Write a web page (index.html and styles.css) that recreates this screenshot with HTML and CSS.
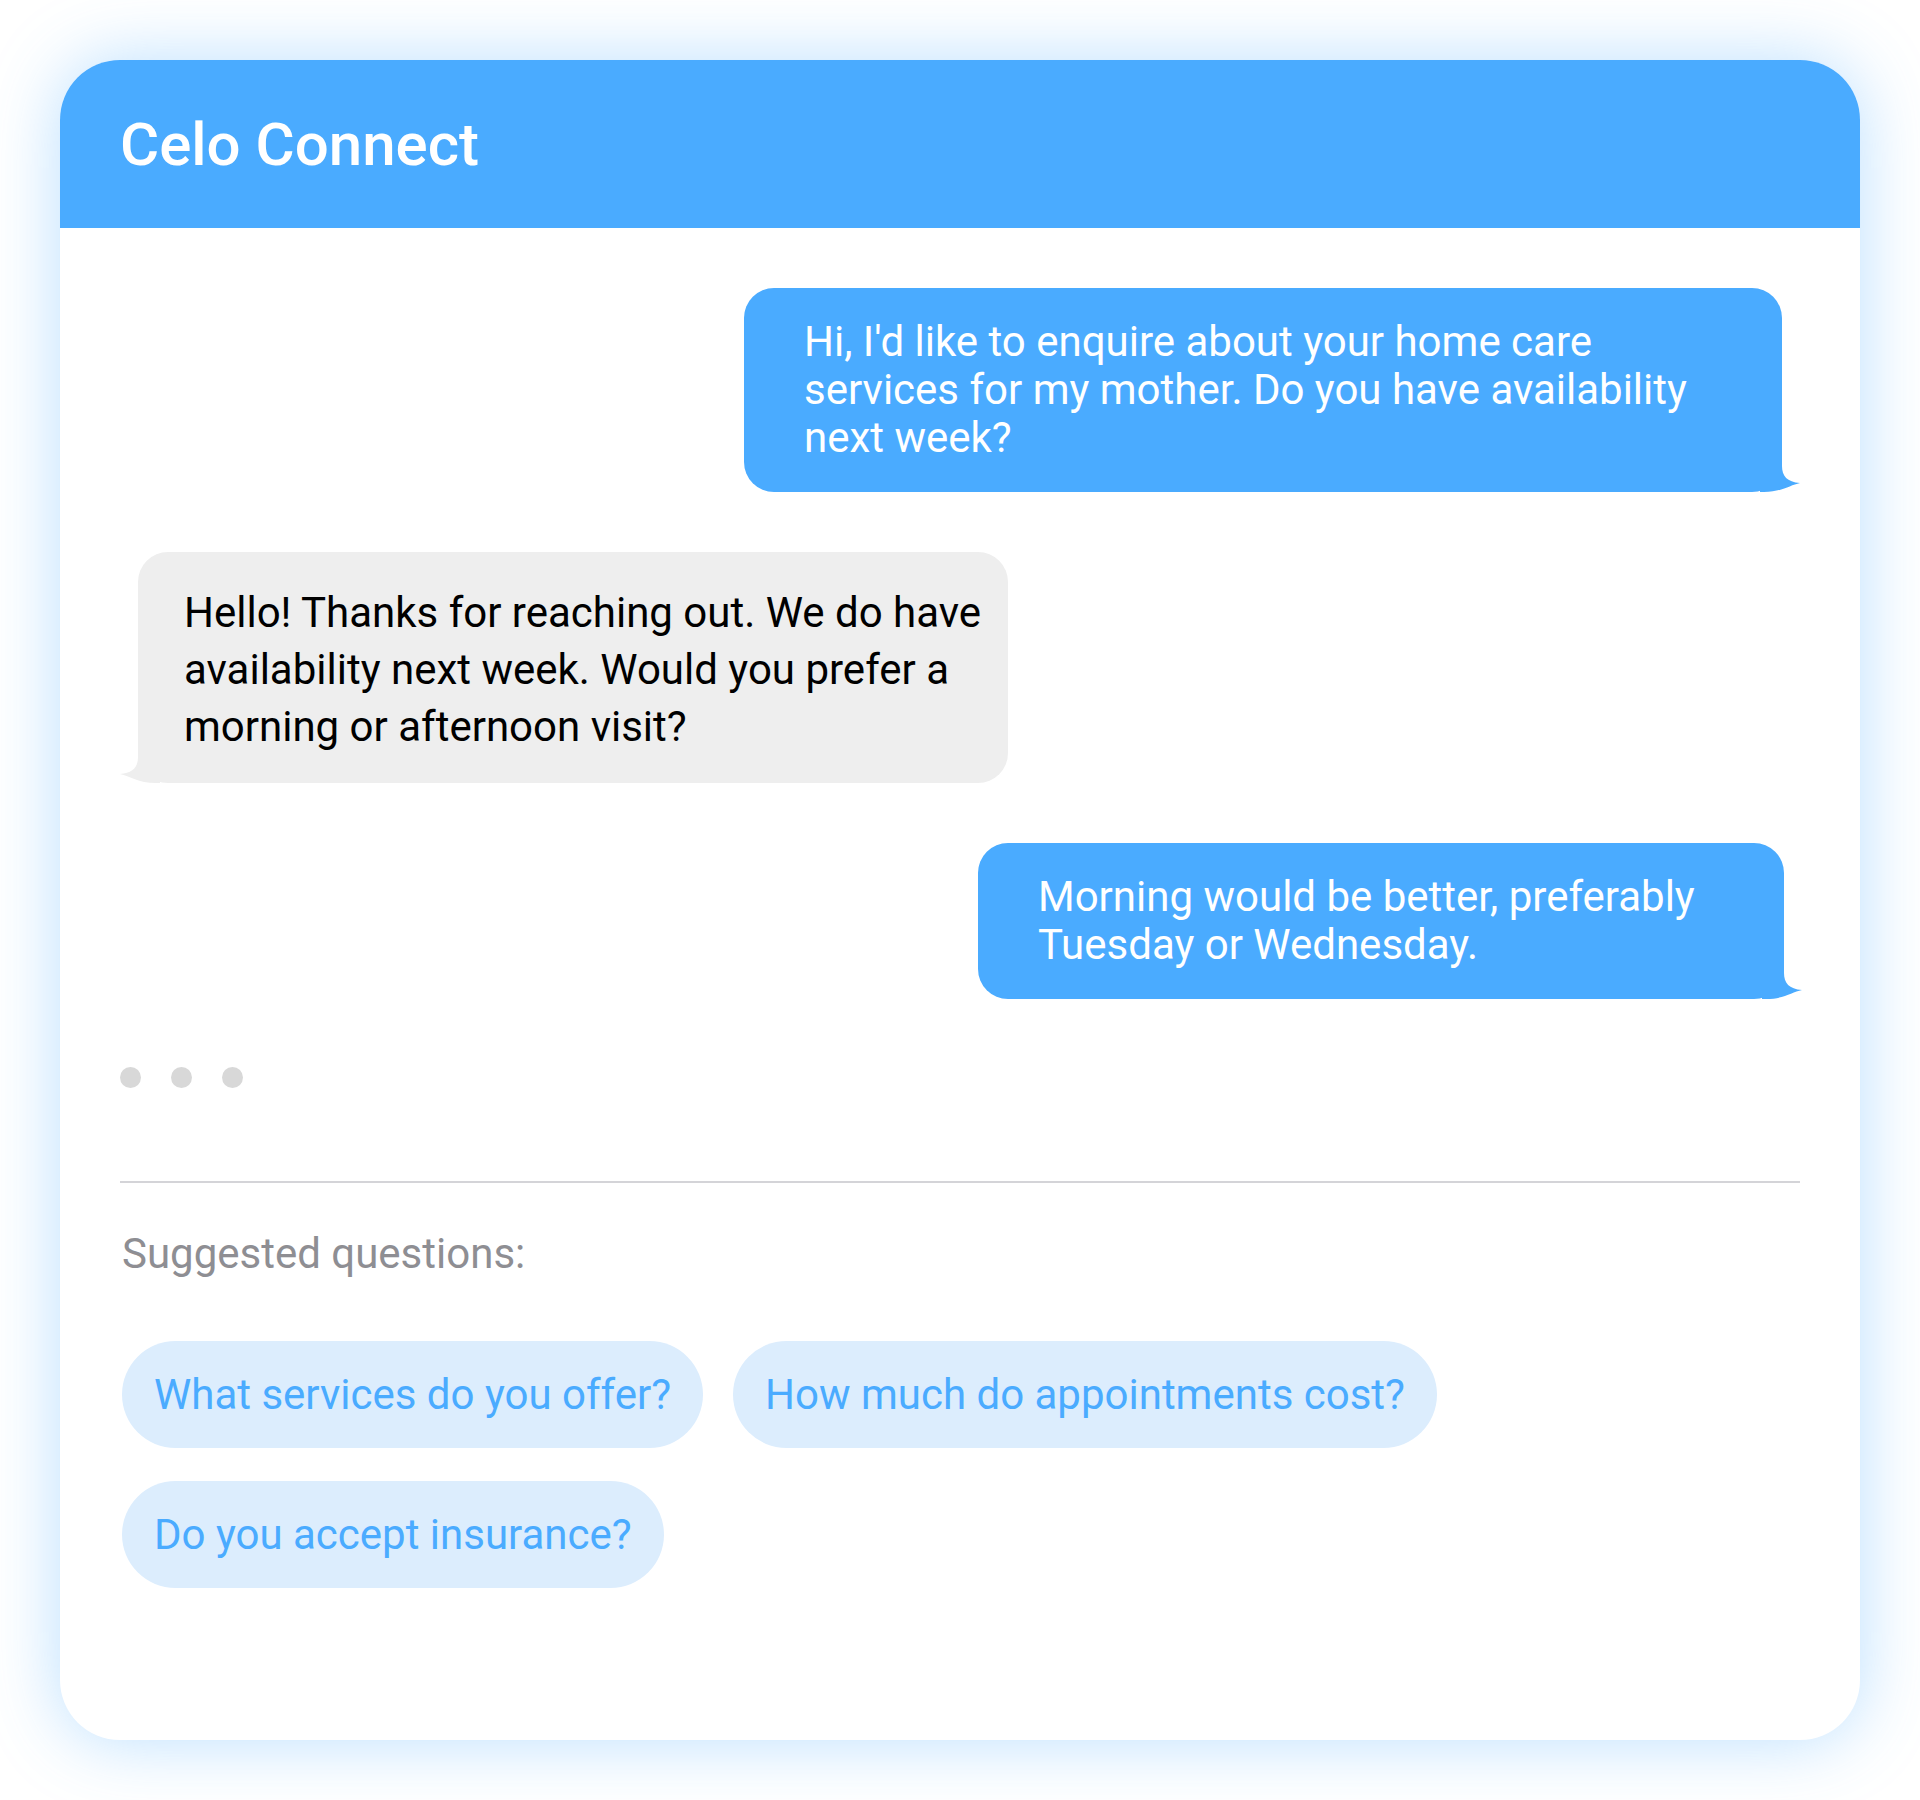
FILE: index.html
```html
<!DOCTYPE html>
<html lang="en">
<head>
    <meta charset="UTF-8">
    <meta name="viewport" content="width=device-width, initial-scale=1.0">
    <title>Celo Connect</title>
    <link rel="stylesheet" href="styles.css">
</head>
<body>

<div class="chat-card">
    <div class="chat-header">
        <h1>Celo Connect</h1>
    </div>

    <div class="chat-body">
        <div class="messages">
            <div class="msg msg-user msg-long">
                <p>Hi, I'd like to enquire about your home care<br>services for my mother. Do you have availability<br>next week?</p>
                <svg class="tail" viewBox="0 0 40 32" width="40" height="32"><path d="M0 0 H22 V6 C22 16 27 22 40 23 C30 25 22 32 4 32 H0 Z"/></svg>
            </div>

            <div class="msg msg-bot">
                <p>Hello! Thanks for reaching out. We do have<br>availability next week. Would you prefer a<br>morning or afternoon visit?</p>
                <svg class="tail" viewBox="0 0 40 32" width="40" height="32"><path d="M0 0 H22 V6 C22 16 27 22 40 23 C30 25 22 32 4 32 H0 Z"/></svg>
            </div>

            <div class="msg msg-user msg-short">
                <p>Morning would be better, preferably<br>Tuesday or Wednesday.</p>
                <svg class="tail" viewBox="0 0 40 32" width="40" height="32"><path d="M0 0 H22 V6 C22 16 27 22 40 23 C30 25 22 32 4 32 H0 Z"/></svg>
            </div>

            <div class="typing">
                <span></span>
                <span></span>
                <span></span>
            </div>
        </div>

        <hr class="divider">

        <div class="suggestions">
            <p class="suggestions-label">Suggested questions:</p>
            <div class="chips">
                <button class="chip">What services do you offer?</button>
                <button class="chip">How much do appointments cost?</button>
                <button class="chip">Do you accept insurance?</button>
            </div>
        </div>
    </div>
</div>

</body>
</html>
```

FILE: styles.css
```css
/* Global Styles */
body {
    font-family: 'Roboto', 'Liberation Sans', sans-serif;
    margin: 0;
    padding: 60px;
    background: #fff;
}

.chat-card {
    width: 1800px;
    background: #fff;
    border-radius: 60px;
    overflow: hidden;
    box-shadow: 0 0 70px rgba(74, 171, 255, 0.38);
}

/* Header */
.chat-header {
    height: 168px;
    background: #4aabff;
    padding: 0 60px;
    display: flex;
    align-items: center;
}

.chat-header h1 {
    margin: 0;
    color: #fff;
    font-size: 60px;
    font-weight: 500;
}

/* Messages */
.chat-body {
    padding: 60px 60px 152px;
}

.messages {
    display: flex;
    flex-direction: column;
    gap: 60px;
}

.msg {
    position: relative;
    box-sizing: border-box;
    border-radius: 30px;
    font-size: 42px;
    line-height: 48px;
}

.msg p {
    margin: 0;
    white-space: nowrap;
}

.msg .tail {
    position: absolute;
    bottom: 0;
    display: block;
}

.msg-user {
    align-self: flex-end;
    margin-right: 18px;
    padding: 30px 60px;
    background: #4aabff;
    color: #fff;
}

.msg-user .tail {
    right: -18px;
    fill: #4aabff;
}

.msg-long {
    width: 1038px;
}

.msg-short {
    width: 806px;
    margin-right: 16px;
}

.msg-bot {
    align-self: flex-start;
    width: 870px;
    margin-left: 18px;
    padding: 32px 20px 28px 46px;
    background: #eeeeee;
    color: #000;
    line-height: 57px;
}

.msg-bot .tail {
    left: -18px;
    fill: #eeeeee;
    transform: scaleX(-1);
}

/* Typing indicator */
.typing {
    display: flex;
    gap: 30px;
    margin-top: 8px;
}

.typing span {
    width: 21px;
    height: 21px;
    border-radius: 50%;
    background: #d8d8d8;
}

.divider {
    margin: 93px 0 0;
    border: none;
    height: 2px;
    background: #d4d4d8;
}

/* Suggestions */
.suggestions {
    padding: 0 2px;
}

.suggestions-label {
    margin: 47px 0 63px;
    font-size: 42px;
    line-height: 48px;
    color: #8e8e93;
}

.chips {
    display: flex;
    flex-wrap: wrap;
    gap: 33px 30px;
}

.chip {
    font-family: inherit;
    font-size: 42px;
    line-height: 49px;
    padding: 29px 32px;
    border: none;
    border-radius: 60px;
    background: #dcedfd;
    color: #4aabff;
    cursor: pointer;
}
```
